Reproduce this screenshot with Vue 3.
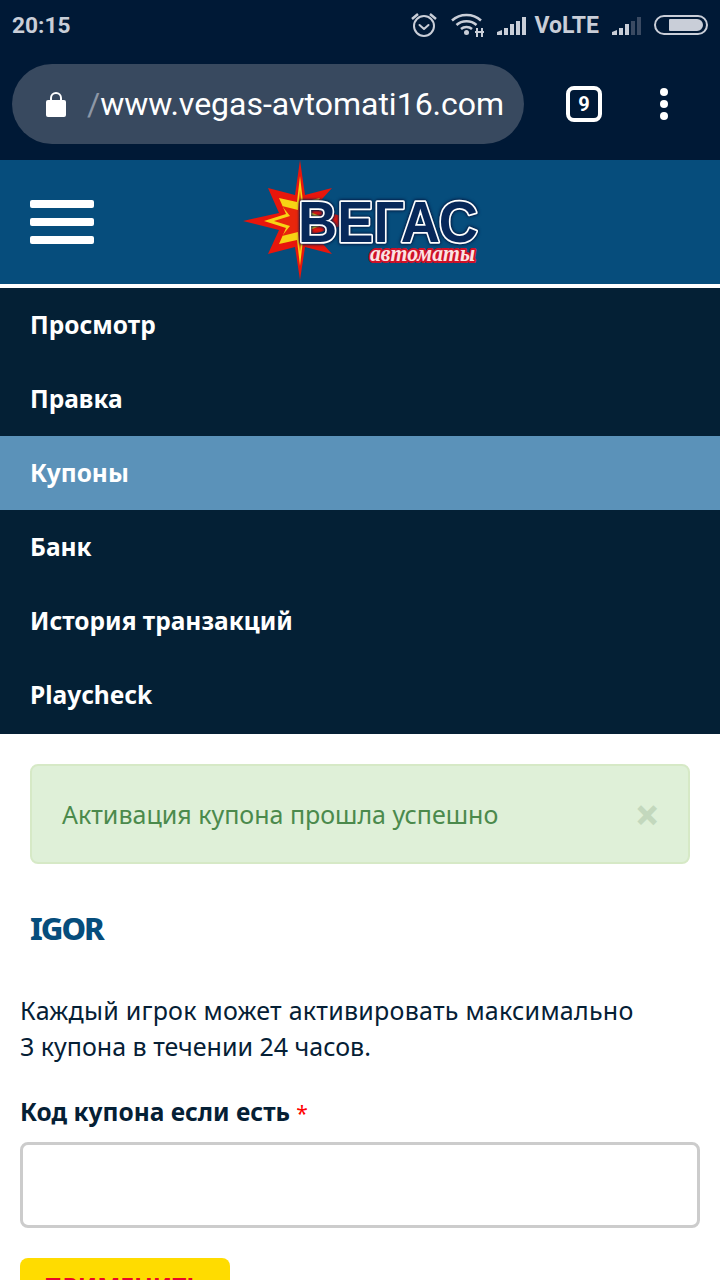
<script setup>
const menu = [
  { label: 'Просмотр' },
  { label: 'Правка' },
  { label: 'Купоны', active: true },
  { label: 'Банк' },
  { label: 'История транзакций' },
  { label: 'Playcheck' }
]
</script>

<template>
  <div class="page">
    <div class="chrome">
      <div class="status">
        <span class="time">20:15</span>
        <div class="status-icons">
          <svg class="alarm" width="28" height="28" viewBox="0 0 28 28" fill="none" stroke="#c9ced8" stroke-width="2">
            <circle cx="14" cy="15" r="10" />
            <path d="M9.500 14l4.500 4 4.500-4" stroke-linecap="round" stroke-linejoin="round" />
            <path d="M2 8l6-5M26 8l-6-5" stroke-width="2.500" />
          </svg>
          <svg width="34" height="24" viewBox="0 0 34 24" fill="none" stroke="#c9ced8" stroke-width="2.500">
            <path d="M1 7.500c8-7.500 21-7.500 29 0" />
            <path d="M5.500 12c5.500-5 14.500-5 20 0" />
            <path d="M10 16c3-2.700 8-2.700 11 0" />
            <circle cx="15.500" cy="19.500" r="2.500" fill="#c9ced8" stroke="none" />
            <path d="M26 15v9M31 15v9" stroke-width="2" />
            <path d="M24 19h9" stroke-width="2" />
          </svg>
          <svg class="bars" width="30" height="20" viewBox="0 0 30 20" fill="#c9ced8">
            <path d="M0 20v-3l5-2v5zM7 20v-7h4v7zM13 20v-11h4v11zM19 20v-14h4v14zM25 20v-18h4v18z" />
          </svg>
          <span class="volte">VoLTE</span>
          <svg class="bars bars2" width="30" height="20" viewBox="0 0 30 20" fill="#c9ced8">
            <path d="M0 20v-3l5-2v5zM7 20v-7h4v7zM13 20v-11h4v11z" />
            <path d="M19 20v-14h4v14zM25 20v-18h4v18z" fill="#3a4a62" />
          </svg>
          <div class="battery"><div class="battery-fill"></div></div>
        </div>
      </div>
      <div class="toolbar">
        <div class="url">
          <svg class="lock" width="22" height="28" viewBox="0 0 22 28">
            <path d="M6 12V8a5 5 0 0 1 10 0v4" fill="none" stroke="#fff" stroke-width="2" />
            <rect x="1" y="10" width="20" height="17" rx="2" fill="#fff" />
          </svg>
          <span class="url-text"><span class="slash">/</span>www.vegas-avtomati16.com</span>
        </div>
        <div class="tabs">9</div>
        <div class="dots"><i></i><i></i><i></i></div>
      </div>
    </div>

    <header class="site-head">
      <div class="burger"><i></i><i></i><i></i></div>
      <svg class="logo" width="240" height="122" viewBox="0 0 240 122">
        <polygon fill="#e8160c" points="58,0 63,35 90,28 72,48 116,61 72,74 90,94 63,87 58,120 53,87 26,94 37,70 1,61 37,53 26,28 53,35" />
        <polygon fill="#f7d414" points="58,16 61,42 78,38 68,52 90,61 68,70 78,84 61,80 58,106 55,80 37,84 44,68 22,61 44,54 37,38 55,42" />
        <polygon fill="#e8260c" points="58,30 60,50 72,48 64,61 72,74 60,72 58,92 56,72 40,76 48,66 32,61 48,56 40,46 56,50" />
        <text class="logo-main" x="56" y="82" textLength="180" lengthAdjust="spacingAndGlyphs">ВЕГАС</text>
        <text class="logo-sub" x="128" y="101" textLength="105" lengthAdjust="spacingAndGlyphs">автоматы</text>
      </svg>
    </header>

    <nav class="menu">
      <a v-for="item in menu" :key="item.label" class="menu-item" :class="{ active: item.active }">{{ item.label }}</a>
    </nav>

    <main class="content">
      <div class="alert">
        <span>Активация купона прошла успешно</span>
        <span class="close">×</span>
      </div>
      <h1 class="title">IGOR</h1>
      <p class="intro"><span class="intro-first">Каждый игрок может активировать максимально</span><br />3 купона в течении 24 часов.</p>
      <label class="label">Код купона если есть <span class="req">*</span></label>
      <input class="field" type="text" />
      <button class="apply" type="button">ПРИМЕНИТЬ</button>
    </main>
  </div>
</template>

<style>
html, body { margin: 0; background: #fff; }
</style>

<style scoped>
.page {
  width: 720px;
  height: 1280px;
  overflow: hidden;
  font-family: "Noto Sans", "Open Sans", sans-serif;
  color: #052035;
}
.chrome { background: #001936; height: 160px; }
.status {
  height: 48px;
  display: flex;
  justify-content: space-between;
  align-items: center;
  padding: 2px 12px 0 12px;
  box-sizing: border-box;
}
.time {
  font: 700 22.700px Roboto, sans-serif;
  color: #c9ced8;
}
.status-icons { display: flex; align-items: center; }
.alarm { margin-right: 13px; }
.bars { margin-left: 12px; }
.volte {
  font: 700 23px Roboto, sans-serif;
  color: #c9ced8;
  margin-left: 7px;
}
.bars2 { margin-left: 13px; }
.battery {
  width: 54px;
  height: 20px;
  margin-left: 12px;
  border: 2px solid #c9ced8;
  border-radius: 11px;
  box-sizing: border-box;
  display: flex;
  justify-content: flex-end;
  padding: 2px 3px;
}
.battery-fill { width: 34px; background: #c9ced8; border-radius: 1px 6px 6px 1px; }
.toolbar {
  height: 112px;
  display: flex;
  align-items: flex-start;
  padding: 16px 0 0 12px;
}
.url {
  width: 512px;
  height: 80px;
  background: #38495f;
  border-radius: 40px;
  display: flex;
  align-items: center;
  padding-left: 33px;
  box-sizing: border-box;
  flex-shrink: 0;
}
.lock { margin-right: 20px; }
.url-text {
  font: 400 32px Roboto, sans-serif;
  color: #fff;
  white-space: nowrap;
}
.slash { color: #8d97a6; }
.tabs {
  width: 36px;
  height: 36px;
  border: 4px solid #fff;
  border-radius: 8px;
  box-sizing: border-box;
  margin: 22px 0 0 42px;
  color: #fff;
  font: 700 20px Roboto, sans-serif;
  display: flex;
  align-items: center;
  justify-content: center;
}
.dots {
  display: flex;
  flex-direction: column;
  gap: 4px;
  margin: 24px 0 0 58px;
}
.dots i { width: 8px; height: 8px; border-radius: 50%; background: #fff; display: block; }
.site-head {
  height: 124px;
  background: #064d7c;
  border-bottom: 4px solid #fff;
  display: flex;
  align-items: flex-start;
  padding-left: 30px;
}
.burger {
  display: flex;
  flex-direction: column;
  gap: 10px;
  margin-top: 40px;
  margin-right: 148px;
}
.burger i { width: 64px; height: 8px; background: #fff; border-radius: 2px; display: block; }
.logo { display: block; flex-shrink: 0; }
.logo-main {
  font: 700 58px "Liberation Sans", sans-serif;
  fill: #07285a;
  stroke: #fff;
  stroke-width: 3.500px;
  stroke-linejoin: round;
  paint-order: stroke;
  filter: drop-shadow(0 0 1.500px #04204a) drop-shadow(0 0 1px #04204a);
}
.logo-sub {
  font: italic 700 24px "Liberation Serif", serif;
  fill: #fbe3e3;
  stroke: #cf1026;
  stroke-width: 4px;
  stroke-linejoin: round;
  paint-order: stroke;
}
.menu { background: #042035; display: flex; flex-direction: column; padding-bottom: 2px; }
.menu-item {
  height: 74px;
  box-sizing: border-box;
  padding: 0 0 2px 30px;
  display: flex;
  align-items: center;
  font-size: 24.500px;
  font-weight: 700;
  color: #fff;
}
.menu-item.active { background: #5b92b9; }
.content { padding: 30px 20px 0; display: flex; flex-direction: column; align-items: flex-start; }
.alert {
  width: 660px;
  height: 100px;
  margin-left: 10px;
  box-sizing: border-box;
  background: #dff0d8;
  border: 2px solid #d6e9c6;
  border-radius: 8px;
  padding: 0 28px 0 30px;
  display: flex;
  align-items: center;
  justify-content: space-between;
  color: #4b8a4c;
  font-size: 25px;
}
.close {
  font-size: 44px;
  font-weight: 800;
  line-height: 1;
  color: #c3d8bd;
}
.title {
  margin: 41px 0 0 10px;
  font-size: 31px;
  line-height: 46px;
  font-weight: 800;
  letter-spacing: -2px;
  color: #064d7c;
}
.intro {
  margin: 41px 0 0;
  font-size: 25px;
  line-height: 36px;
}
.intro-first { letter-spacing: 0.250px; }
.label {
  margin-top: 30px;
  font-size: 24.500px;
  line-height: 36px;
  font-weight: 700;
}
.req { color: #f00; font-weight: 400; font-size: 21px; }
.field {
  width: 680px;
  height: 86px;
  margin-top: 11px;
  box-sizing: border-box;
  border: 3px solid #ccc;
  border-radius: 8px;
  background: #fff;
  outline: none;
}
.apply {
  width: 210px;
  height: 80px;
  margin-top: 30px;
  padding: 11px 4px 33px 0;
  box-sizing: border-box;
  background: #ffdc00;
  border: none;
  border-radius: 8px;
  color: #e8062c;
  font: 700 24.500px/36px "Noto Sans", sans-serif;
}
</style>
